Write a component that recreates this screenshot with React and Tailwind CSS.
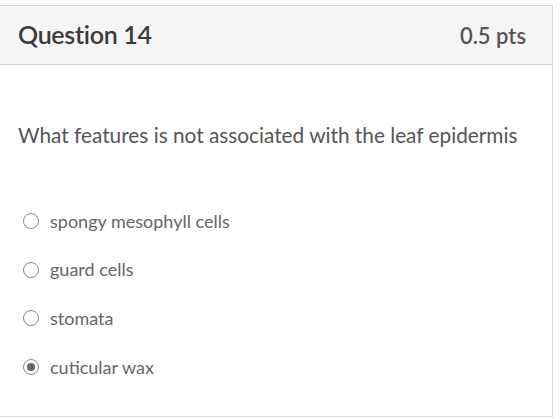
export default function App() {
  const opts = ["spongy mesophyll cells", "guard cells", "stomata", "cuticular wax"];
  return (
    <div className="w-[560px] h-[419px] bg-white overflow-hidden pt-[5px]" style={{ fontFamily: "Lato, 'Open Sans', sans-serif" }}>
      <div className="w-[553px] h-[412px] border-t border-r border-b border-[#d9d9d9] flex flex-col">
        <div className="h-[59px] bg-[#f5f5f5] border-b border-[#cfcfcf] flex items-center justify-between pl-[18px] pr-[26px]">
          <span className="text-[25px] font-semibold text-[#3b3b3b] tracking-[-0.3px]">Question 14</span>
          <span className="text-[22px] font-semibold text-[#555]">0.5 pts</span>
        </div>
        <div className="pl-[18px] pt-[56px]">
          <p className="text-[20.8px] text-[#555] leading-[28px]">What features is not associated with the leaf epidermis</p>
          <div className="mt-[62px] flex flex-col gap-[28.7px] pl-[5px]">
            {opts.map((o, i) => (
              <div key={o} className="flex items-center h-[20px]">
                <span className="w-[16px] h-[16px] rounded-full border-[1.5px] border-[#8a8a8a] flex items-center justify-center">
                  {i === 3 && <span className="w-[8px] h-[8px] rounded-full bg-[#666]" />}
                </span>
                <span className="ml-[11px] text-[18px] text-[#666]">{o}</span>
              </div>
            ))}
          </div>
        </div>
      </div>
    </div>
  );
}
